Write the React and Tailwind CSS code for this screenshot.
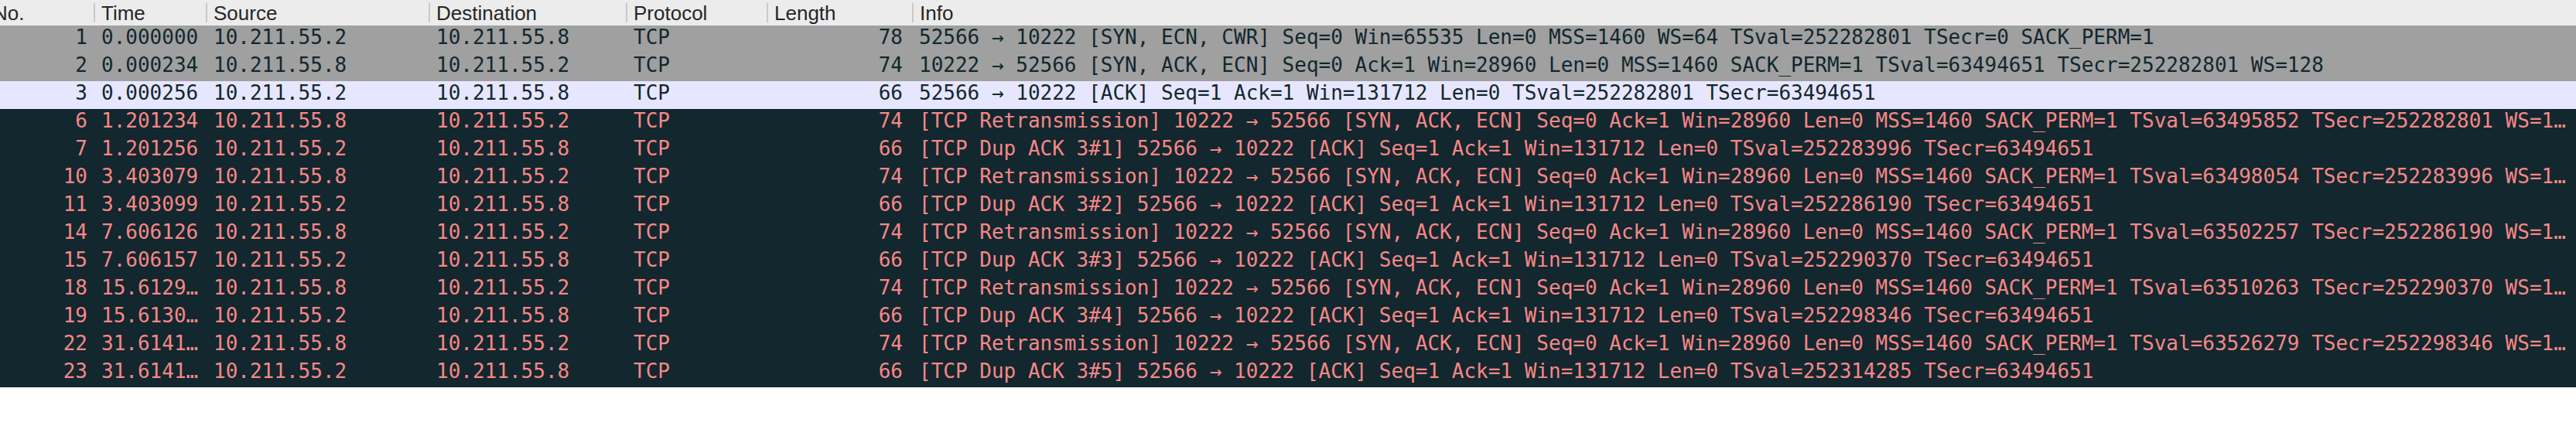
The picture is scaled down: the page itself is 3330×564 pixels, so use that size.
import React from "react";

const retx = (tsval, tsecr) =>
  `[TCP Retransmission] 10222 → 52566 [SYN, ACK, ECN] Seq=0 Ack=1 Win=28960 Len=0 MSS=1460 SACK_PERM=1 TSval=${tsval} TSecr=${tsecr} WS=128`;
const dup = (n, tsval) =>
  `[TCP Dup ACK 3#${n}] 52566 → 10222 [ACK] Seq=1 Ack=1 Win=131712 Len=0 TSval=${tsval} TSecr=63494651`;

const A = "10.211.55.2";
const B = "10.211.55.8";

const rows = [
  { no: 1, time: "0.000000", src: A, dst: B, len: 78, kind: "syn", info: "52566 → 10222 [SYN, ECN, CWR] Seq=0 Win=65535 Len=0 MSS=1460 WS=64 TSval=252282801 TSecr=0 SACK_PERM=1" },
  { no: 2, time: "0.000234", src: B, dst: A, len: 74, kind: "syn", info: "10222 → 52566 [SYN, ACK, ECN] Seq=0 Ack=1 Win=28960 Len=0 MSS=1460 SACK_PERM=1 TSval=63494651 TSecr=252282801 WS=128" },
  { no: 3, time: "0.000256", src: A, dst: B, len: 66, kind: "tcp", info: "52566 → 10222 [ACK] Seq=1 Ack=1 Win=131712 Len=0 TSval=252282801 TSecr=63494651" },
  { no: 6, time: "1.201234", src: B, dst: A, len: 74, kind: "bad", info: retx("63495852", "252282801") },
  { no: 7, time: "1.201256", src: A, dst: B, len: 66, kind: "bad", info: dup(1, "252283996") },
  { no: 10, time: "3.403079", src: B, dst: A, len: 74, kind: "bad", info: retx("63498054", "252283996") },
  { no: 11, time: "3.403099", src: A, dst: B, len: 66, kind: "bad", info: dup(2, "252286190") },
  { no: 14, time: "7.606126", src: B, dst: A, len: 74, kind: "bad", info: retx("63502257", "252286190") },
  { no: 15, time: "7.606157", src: A, dst: B, len: 66, kind: "bad", info: dup(3, "252290370") },
  { no: 18, time: "15.612945", src: B, dst: A, len: 74, kind: "bad", info: retx("63510263", "252290370") },
  { no: 19, time: "15.613012", src: A, dst: B, len: 66, kind: "bad", info: dup(4, "252298346") },
  { no: 22, time: "31.614123", src: B, dst: A, len: 74, kind: "bad", info: retx("63526279", "252298346") },
  { no: 23, time: "31.614145", src: A, dst: B, len: 66, kind: "bad", info: dup(5, "252314285") },
];

const kindClass = {
  syn: "bg-[#a0a0a0] text-[#12272e]",
  tcp: "bg-[#e7e6ff] text-[#12272e]",
  bad: "bg-[#12272e] text-[#f78787]",
};

const GRID = "grid grid-cols-[121px_145px_288px_255px_182px_188px_minmax(0,1fr)]";

function HeadCell({ label, first }) {
  return (
    <div className="flex items-center h-[33px] min-w-0 overflow-hidden">
      {first ? (
        <span className="ml-[-9px] whitespace-nowrap">{label}</span>
      ) : (
        <>
          <div className="w-[2px] h-[25px] bg-[#c9c9c9] shrink-0" />
          <span className="ml-[8px] whitespace-nowrap">{label}</span>
        </>
      )}
    </div>
  );
}

export default function App() {
  return (
    <div className="w-[3330px] bg-white">
      <div className={`${GRID} bg-[#ececec] text-[#262626] text-[26px] leading-[30px] font-['Liberation_Sans',Arial,sans-serif]`}>
        <HeadCell label="No." first />
        <HeadCell label="Time" />
        <HeadCell label="Source" />
        <HeadCell label="Destination" />
        <HeadCell label="Protocol" />
        <HeadCell label="Length" />
        <HeadCell label="Info" />
      </div>
      <div className="font-['DejaVu_Sans_Mono',monospace] text-[26px] leading-[30px]">
        {rows.map((r) => (
          <div key={r.no} className={`${GRID} h-[36px] ${kindClass[r.kind]}`}>
            <div className="text-right pr-[8px] truncate">{r.no}</div>
            <div className="pl-[10px] pr-[6px] truncate">{r.time}</div>
            <div className="pl-[10px] pr-[6px] truncate">{r.src}</div>
            <div className="pl-[10px] pr-[6px] truncate">{r.dst}</div>
            <div className="pl-[10px] pr-[6px] truncate">TCP</div>
            <div className="text-right pr-[12px] truncate">{r.len}</div>
            <div className="pl-[9px] pr-[6px] truncate">{r.info}</div>
          </div>
        ))}
      </div>
    </div>
  );
}
